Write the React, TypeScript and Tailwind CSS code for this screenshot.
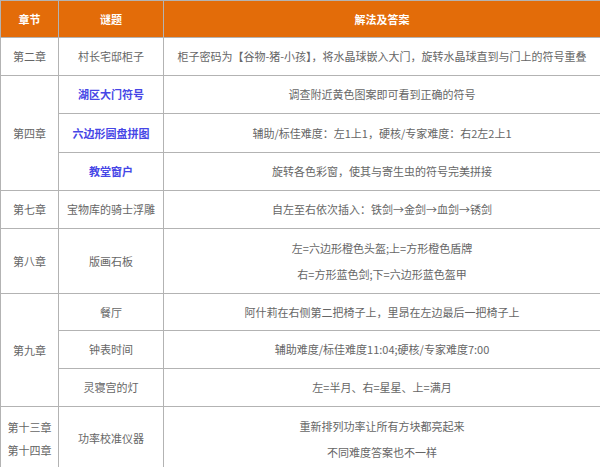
const b = "border border-[#b3b3b3]";
const link = "text-[#4646e6] font-bold";

export default function App() {
  return (
    <div className="w-[600px] h-[467px] overflow-hidden bg-white" style={{ fontFamily: '"Noto Sans CJK SC", sans-serif' }}>
      <table className="w-[601px] border-collapse text-[11px] text-[#666] text-center">
        <colgroup>
          <col className="w-[58px]" />
          <col className="w-[105px]" />
          <col />
        </colgroup>
        <tbody>
          <tr className="h-[37px] bg-[#e36c09] text-white font-bold">
            <td className={b}>章节</td>
            <td className={b}>谜题</td>
            <td className={b}>解法及答案</td>
          </tr>
          <tr className="h-[38px]">
            <td className={b}>第二章</td>
            <td className={b}>村长宅邸柜子</td>
            <td className={b}>柜子密码为【谷物-猪-小孩】，将水晶球嵌入大门，旋转水晶球直到与门上的符号重叠</td>
          </tr>
          <tr className="h-[38px]">
            <td className={b} rowSpan={3}>第四章</td>
            <td className={`${b} ${link}`}>湖区大门符号</td>
            <td className={b}>调查附近黄色图案即可看到正确的符号</td>
          </tr>
          <tr className="h-[39px]">
            <td className={`${b} ${link}`}>六边形圆盘拼图</td>
            <td className={b}>辅助/标佳难度：左1上1，硬核/专家难度：右2左2上1</td>
          </tr>
          <tr className="h-[38px]">
            <td className={`${b} ${link}`}>教堂窗户</td>
            <td className={b}>旋转各色彩窗，使其与寄生虫的符号完美拼接</td>
          </tr>
          <tr className="h-[38px]">
            <td className={b}>第七章</td>
            <td className={b}>宝物库的骑士浮雕</td>
            <td className={b}>自左至右依次插入：铁剑→金剑→血剑→锈剑</td>
          </tr>
          <tr className="h-[65px]">
            <td className={b}>第八章</td>
            <td className={b}>版画石板</td>
            <td className={`${b} leading-[26px]`}>
              <div>左=六边形橙色头盔;上=方形橙色盾牌</div>
              <div>右=方形蓝色剑;下=六边形蓝色盔甲</div>
            </td>
          </tr>
          <tr className="h-[37px]">
            <td className={b} rowSpan={3}>第九章</td>
            <td className={b}>餐厅</td>
            <td className={b}>阿什莉在右侧第二把椅子上，里昂在左边最后一把椅子上</td>
          </tr>
          <tr className="h-[38px]">
            <td className={b}>钟表时间</td>
            <td className={b}>辅助难度/标佳难度11:04;硬核/专家难度7:00</td>
          </tr>
          <tr className="h-[38px]">
            <td className={b}>灵寝宫的灯</td>
            <td className={b}>左=半月、右=星星、上=满月</td>
          </tr>
          <tr className="h-[64px]">
            <td className={`${b} leading-[23px]`}>
              <div>第十三章</div>
              <div>第十四章</div>
            </td>
            <td className={b}>功率校准仪器</td>
            <td className={`${b} leading-[26px]`}>
              <div>重新排列功率让所有方块都亮起来</div>
              <div>不同难度答案也不一样</div>
            </td>
          </tr>
        </tbody>
      </table>
    </div>
  );
}
